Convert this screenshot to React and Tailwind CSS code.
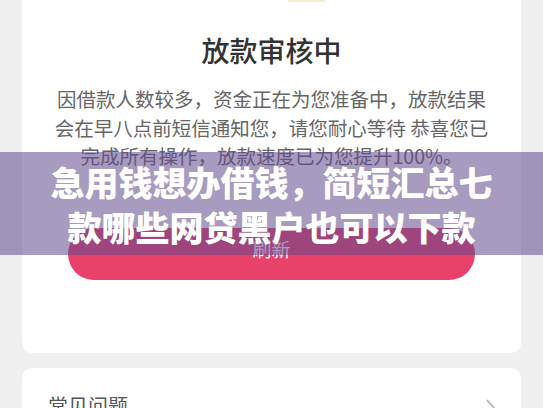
import React from 'react';

const cjk = { fontFamily: '"Noto Sans CJK SC", "Noto Sans", sans-serif' };

export default function App() {
  return (
    <div className="relative h-[408px] w-[543px] overflow-hidden bg-[#f0f0f0]" style={cjk}>
      {/* Loan status card */}
      <div className="mx-[22px] rounded-b-[10px] bg-white pb-[73px]">
        <div className="ml-[266px] h-[2px] w-[37px] rounded-b-full bg-[#f3ecd0]" />
        <h1 className="mt-[28px] text-center text-[28px] font-medium leading-[40px] text-[#333]">
          放款审核中
        </h1>
        <p className="mt-[15px] text-center text-[19.5px] leading-[28.5px] text-[#666]">
          因借款人数较多，资金正在为您准备中，放款结果
          <br />
          会在早八点前短信通知您，请您耐心等待 恭喜您已
          <br />
          完成所有操作，放款速度已为您提升100%。
        </p>
        <button className="mx-[46px] mt-[57px] flex h-[52px] w-[407px] items-center justify-center rounded-full bg-[#e8416a] pb-[9px] text-[19px] text-white">
          刷新
        </button>
      </div>

      {/* FAQ card */}
      <div className="mx-[22px] mt-[15px] flex items-start justify-between rounded-[10px] bg-white pl-[26px] pr-[26px] pt-[24px] pb-4">
        <span className="text-[20px] leading-[28px] text-[#555]">常见问题</span>
        <svg width="10" height="18" viewBox="0 0 10 18" className="mt-[7px]">
          <polyline points="2,1 9,9 2,17" fill="none" stroke="#bdbdbd" strokeWidth="2" />
        </svg>
      </div>

      {/* Title overlay band */}
      <div className="absolute left-0 top-[152px] h-[103px] w-full bg-[rgba(96,73,140,0.55)] pt-[8px] text-center text-[34px] font-black leading-[44.5px] text-white">
        急用钱想办借钱，简短汇总七
        <br />
        款哪些网贷黑户也可以下款
      </div>
    </div>
  );
}
